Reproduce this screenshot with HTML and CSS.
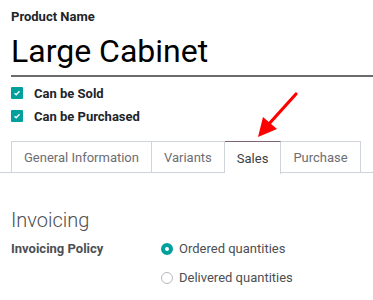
FILE: index.html
```html
<!DOCTYPE html>
<html>
<head>
<meta charset="utf-8">
<link rel="stylesheet" href="styles.css">
</head>
<body>
<div class="page">
  <div class="sheet">
    <div class="label-top">Product Name</div>
    <div class="title">Large Cabinet</div>
    <div class="checks">
      <div class="check"><span class="box"><svg viewBox="0 0 12 12" width="12" height="12"><path d="M3.5 6.3 L5.2 7.8 L8.5 4.3" fill="none" stroke="#fff" stroke-width="1.4"/></svg></span><span class="check-label">Can be Sold</span></div>
      <div class="check"><span class="box"><svg viewBox="0 0 12 12" width="12" height="12"><path d="M3.5 6.3 L5.2 7.8 L8.5 4.3" fill="none" stroke="#fff" stroke-width="1.4"/></svg></span><span class="check-label">Can be Purchased</span></div>
    </div>
  </div>
  <div class="tabs">
    <div class="tab">General Information</div>
    <div class="tab">Variants</div>
    <div class="tab active">Sales</div>
    <div class="tab">Purchase</div>
  </div>
  <div class="section">
    <div class="section-title">Invoicing</div>
    <div class="field">
      <div class="field-label">Invoicing Policy</div>
      <div class="radios">
        <div class="radio"><span class="dot on"></span><span>Ordered quantities</span></div>
        <div class="radio"><span class="dot"></span><span>Delivered quantities</span></div>
      </div>
    </div>
  </div>
  <svg class="arrow" width="60" height="60" viewBox="0 0 60 60">
    <line x1="50" y1="6" x2="22" y2="37" stroke="#ff0000" stroke-width="3.2" stroke-linecap="round"/>
    <polygon points="12,49 17,29 31,41" fill="#ff0000"/>
  </svg>
</div>
</body>
</html>
```
FILE: styles.css
```css
html, body {
  margin: 0;
  padding: 0;
  background: #fff;
}
body {
  font-family: Roboto, "Noto Sans", sans-serif;
  color: #212529;
}
.page {
  position: relative;
  width: 373px;
  height: 300px;
  overflow: hidden;
}
.sheet {
  padding: 9px 0 0 11px;
}
.label-top {
  font-size: 13px;
  font-weight: 700;
  color: #212529;
  line-height: 16px;
}
.title {
  font-size: 32px;
  line-height: 36px;
  margin-top: 8px;
  color: #000;
  padding-bottom: 6px;
  border-bottom: 2px solid #6c6c6c;
}
.checks {
  display: flex;
  flex-direction: column;
  gap: 7px;
  margin-top: 8px;
}
.check {
  display: flex;
  align-items: center;
  height: 16px;
}
.box {
  width: 12px;
  height: 12px;
  background: #00a09d;
  border-radius: 1px;
  display: inline-flex;
}
.check-label {
  margin-left: 11px;
  font-size: 13px;
  font-weight: 700;
  color: #212529;
}
.tabs {
  margin-top: 17px;
  display: flex;
  padding-left: 11px;
  border-bottom: 1px solid #ced4da;
  height: 31px;
}
.tab {
  border: 1px solid #ced4da;
  border-bottom: none;
  border-left-width: 0;
  padding: 0 12px;
  font-size: 13px;
  color: #6c6e72;
  display: flex;
  align-items: center;
  height: 31px;
}
.tab:first-child {
  border-left-width: 1px;
}
.tab.active {
  color: #3c3f44;
  border-top-color: #7c6576;
  background: #fff;
  height: 32px;
  margin-bottom: -1px;
}
.section {
  padding: 35px 0 0 11px;
}
.section-title {
  font-size: 20px;
  font-weight: 300;
  color: #4c4f54;
  line-height: 24px;
}
.field {
  display: flex;
  margin-top: 8px;
}
.field-label {
  width: 150px;
  font-size: 13px;
  font-weight: 700;
  color: #4c4f54;
  line-height: 18px;
}
.radios {
  display: flex;
  flex-direction: column;
  gap: 11px;
}
.radio {
  display: flex;
  align-items: center;
  font-size: 13px;
  color: #4c4f54;
  line-height: 18px;
  gap: 6px;
}
.dot {
  width: 12px;
  height: 12px;
  border-radius: 50%;
  border: 1px solid #b5b9bd;
  box-sizing: border-box;
  display: inline-block;
}
.dot.on {
  border: 4px solid #00a09d;
  background: #fff;
}
.arrow {
  position: absolute;
  left: 246px;
  top: 88px;
}
```
